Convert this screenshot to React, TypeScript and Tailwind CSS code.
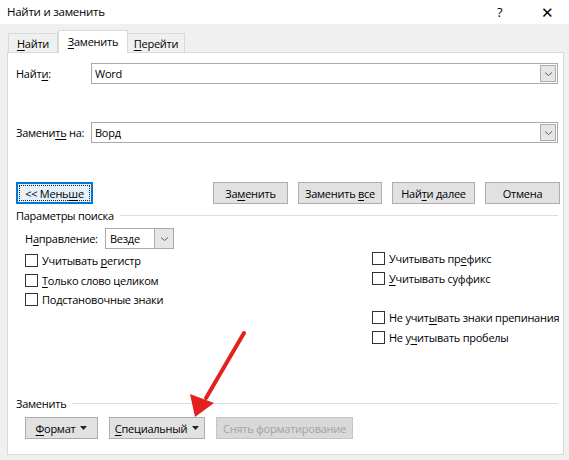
import React from "react";

const U = ({ children }: { children: React.ReactNode }) => (
  <span className="underline underline-offset-2 decoration-1">{children}</span>
);

function Chevron() {
  return (
    <svg width="9" height="6" viewBox="0 0 9 6">
      <path d="M1 1.5 L4.5 4.5 L8 1.5" fill="none" stroke="#606060" strokeWidth="1" />
    </svg>
  );
}

function Combo({ value }: { value: string }) {
  return (
    <div className="flex h-[21px] w-[467px] shrink-0 items-center border border-[#a9a9a9] bg-white">
      <span className="flex-1 pl-[3px] leading-none">{value}</span>
      <div className="mr-[1px] flex h-[17px] w-[16px] items-center justify-center border border-[#adadad] bg-[#e6e6e6]">
        <Chevron />
      </div>
    </div>
  );
}

function Btn({
  children,
  w,
  disabled,
}: {
  children: React.ReactNode;
  w: string;
  disabled?: boolean;
}) {
  return (
    <div
      className={`flex h-[22px] shrink-0 items-center justify-center border ${w} ${
        disabled
          ? "border-[#c4c4c4] bg-[#d9d9d9] text-[#a3a3a3]"
          : "border-[#adadad] bg-[#e1e1e1] text-black"
      }`}
    >
      {children}
    </div>
  );
}

function Check({ children }: { children: React.ReactNode }) {
  return (
    <div className="flex h-[19.5px] items-center">
      <div className="h-[13px] w-[13px] shrink-0 border border-[#333] bg-white" />
      <span className="ml-[4px]">{children}</span>
    </div>
  );
}

function Caret() {
  return (
    <svg width="7" height="4" viewBox="0 0 7 4" className="ml-[5px]">
      <path d="M0 0 H7 L3.5 4 Z" fill="#222" />
    </svg>
  );
}

export default function App() {
  return (
    <div
      className="relative h-[460px] w-[569px] overflow-hidden whitespace-nowrap bg-[#f0f0f0] text-[11px] leading-none tracking-[-0.25px] text-black"
      style={{ fontFamily: "'Open Sans', 'Noto Sans', sans-serif" }}
    >
      {/* title bar */}
      <div className="flex h-[24px] items-center bg-white pl-[7px]">
        <span className="text-[11.5px]">Найти и заменить</span>
        <span className="ml-auto mr-[39px] text-[13px]">?</span>
        <span className="mr-[15px] text-[15px] font-light">✕</span>
      </div>

      {/* tabs */}
      <div className="flex h-[28px] items-end pl-[8px]">
        <div className="flex h-[19px] w-[50px] items-center justify-center border border-b-0 border-[#d9d9d9] bg-[#f0f0f0]">
          <span><U>Н</U>айти</span>
        </div>
        <div className="relative z-10 -mb-[1px] flex h-[23px] w-[70px] items-start justify-center border border-b-0 border-[#d9d9d9] bg-white pt-[5px]">
          <span><U>З</U>аменить</span>
        </div>
        <div className="flex h-[19px] w-[57px] items-center justify-center border border-b-0 border-l-0 border-[#d9d9d9] bg-[#f0f0f0]">
          <span><U>П</U>ерейти</span>
        </div>
      </div>

      {/* panel */}
      <div className="ml-[7px] h-[403px] w-[557px] border border-[#d9d9d9] bg-white pl-[8px]">
        <div className="mt-[10px] flex items-center">
          <span className="w-[75px] shrink-0">Найт<U>и</U>:</span>
          <Combo value="Word" />
        </div>
        <div className="mt-[38px] flex items-center">
          <span className="w-[75px] shrink-0">Замени<U>ть</U> на:</span>
          <Combo value="Ворд" />
        </div>

        {/* action buttons */}
        <div className="mt-[39px] flex items-center">
          <div className="flex h-[22px] w-[77px] shrink-0 items-center justify-center border-2 border-[#0078d7] bg-[#e5f1fb] p-[1px]">
            <div className="flex h-full w-full items-center justify-center border border-dotted border-[#222]">
              <span>&lt;&lt; Мень<U>ш</U>е</span>
            </div>
          </div>
          <div className="ml-[120px] flex gap-[10px]">
            <Btn w="w-[75px]">За<U>м</U>енить</Btn>
            <Btn w="w-[84px]">Заменить&nbsp;<U>в</U>се</Btn>
            <Btn w="w-[83px]">Най<U>т</U>и далее</Btn>
            <Btn w="w-[75px]">Отмена</Btn>
          </div>
        </div>

        {/* search options group */}
        <div className="mt-[6px] flex items-center pr-[5px]">
          <span>Параметры поиска</span>
          <div className="ml-[6px] h-px flex-1 bg-[#dcdcdc]" />
        </div>

        <div className="mt-[7px] flex pl-[9px]">
          <div className="flex w-[347px] shrink-0 flex-col">
            <div className="flex items-center">
              <span className="w-[80px] shrink-0">Н<U>а</U>правление:</span>
              <div className="flex h-[21px] w-[69px] items-center border border-[#a9a9a9] bg-white">
                <span className="flex-1 pl-[4px]">Везде</span>
                <div className="flex h-[19px] w-[19px] items-center justify-center border-l border-[#adadad] bg-[#e6e6e6]">
                  <Chevron />
                </div>
              </div>
            </div>
            <div className="mt-[2px] flex flex-col">
              <Check>Учитывать <U>р</U>егистр</Check>
              <Check><U>Т</U>олько слово целиком</Check>
              <Check>Подстановочные знаки</Check>
            </div>
          </div>
          <div className="flex flex-col pt-[21px]">
            <Check>Учитывать пр<U>е</U>фикс</Check>
            <Check><U>У</U>читывать суффикс</Check>
            <div className="h-[20px]" />
            <Check>Не учит<U>ы</U>вать знаки препинания</Check>
            <Check>Не у<U>ч</U>итывать пробелы</Check>
          </div>
        </div>

        {/* replace group */}
        <div className="mt-[51px] flex items-center pr-[5px]">
          <span>Заменить</span>
          <div className="ml-[6px] h-px flex-1 bg-[#dcdcdc]" />
        </div>
        <div className="mt-[8px] flex gap-[11px] pl-[9px]">
          <Btn w="w-[73px]"><U>Ф</U>ормат<Caret /></Btn>
          <Btn w="w-[96px]"><U>С</U>пециальный<Caret /></Btn>
          <Btn w="w-[137px]" disabled>Снять форматирование</Btn>
        </div>
      </div>

      {/* red pointer arrow */}
      <svg className="pointer-events-none absolute left-0 top-0" width="569" height="460">
        <line x1="244" y1="333" x2="206" y2="398" stroke="#e3211f" strokeWidth="4" strokeLinecap="round" />
        <path d="M195 417 L190 394 L214 403 Z" fill="#e3211f" />
      </svg>
    </div>
  );
}
